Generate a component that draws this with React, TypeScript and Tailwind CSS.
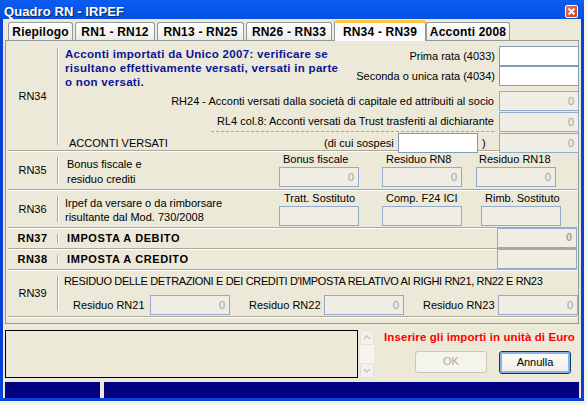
import React from 'react';

const Field: React.FC<{ w?: string; kind?: 'white' | 'off'; value?: string; bold?: boolean; cls?: string }> = ({
  w = 'w-[80px]',
  kind = 'off',
  value,
  bold,
  cls = '',
}) => (
  <div
    className={`${w} h-[20px] border flex items-center justify-end pr-[4px] shrink-0 ${
      kind === 'white' ? 'bg-white border-[#7F9DB9]' : 'bg-[#EFEDE4] border-[#93AACB]'
    } ${cls}`}
  >
    {value && (
      <span className={`text-[#A3A194] text-[11px] ${bold ? 'font-bold' : ''}`}>{value}</span>
    )}
  </div>
);

const RowLabel: React.FC<{ text: string; bold?: boolean }> = ({ text, bold }) => (
  <div className="w-[49px] flex items-center justify-center shrink-0">
    <span className={bold ? 'font-bold text-[11px] tracking-[0.5px]' : 'text-[11px]'}>{text}</span>
  </div>
);

const VSep: React.FC = () => (
  <div className="py-[5px] shrink-0 flex">
    <div className="w-px bg-[#ACA899]" />
    <div className="w-px bg-white" />
  </div>
);

const tabs = ['Riepilogo', 'RN1 - RN12', 'RN13 - RN25', 'RN26 - RN33', 'RN34 - RN39', 'Acconti 2008'];
const tabW = ['w-[65px]', 'w-[80px]', 'w-[87px]', 'w-[86px]', 'w-[92px]', 'w-[84px]'];

const Row: React.FC<{ h: string; children: React.ReactNode }> = ({ h, children }) => (
  <div className={`${h} flex border-b border-[#ACA899] shadow-[0_1px_0_#fff] mb-px`}>{children}</div>
);

export default function App() {
  return (
    <div className="w-[587px] h-[405px] bg-[#F3F2EC] overflow-hidden relative font-['Liberation_Sans',Arial,sans-serif] text-black text-[11px] leading-none">
      <div className="w-[584px] h-[401px] flex flex-col bg-[#0842D6]">
        {/* title bar */}
        <div className="h-[19px] flex items-center justify-between pl-[4px] pr-[6px] bg-gradient-to-b from-[#0A5CF0] to-[#0550E0]">
          <span className="text-white font-bold text-[13px] tracking-[0.1px] mt-[4px] [text-shadow:1px_1px_0_#0A246A]">
            Quadro RN - IRPEF
          </span>
          <div className="w-[13px] h-[13px] mt-[3px] rounded-[2px] border border-white bg-gradient-to-br from-[#E8734F] to-[#C8401B] flex items-center justify-center">
            <svg width="9" height="9" viewBox="0 0 9 9">
              <path d="M1.5 1.5 L7.5 7.5 M7.5 1.5 L1.5 7.5" stroke="white" strokeWidth="1.8" />
            </svg>
          </div>
        </div>

        {/* client */}
        <div className="flex-1 mx-[3px] mb-[3px] bg-[#ECE9D8] flex flex-col pl-[2px] pr-[2px]">
          {/* tabs */}
          <div className="h-[21px] flex items-end pl-[3px]">
            {tabs.map((t, i) =>
              i === 4 ? (
                <div
                  key={t}
                  className={`${tabW[i]} h-[21px] -mb-px z-10 bg-[#FCFCFE] border border-[#919B9C] border-b-0 rounded-t-[3px] border-t-[3px] border-t-[#FFC83C] flex items-center justify-center`}
                >
                  <span className="font-bold text-[12px] tracking-[0.2px]">{t}</span>
                </div>
              ) : (
                <div
                  key={t}
                  className={`${tabW[i]} h-[18px] mr-[2px] bg-gradient-to-b from-white to-[#ECEBE6] border border-[#919B9C] border-b-0 rounded-t-[3px] flex items-center justify-center`}
                >
                  <span className="font-bold text-[12px] tracking-[0.2px]">{t}</span>
                </div>
              )
            )}
          </div>

          {/* panel */}
          <div className="h-[284px] border border-[#919B9C] bg-[#ECE9D8] pl-[2px] pr-[1px] pt-[2px] flex flex-col">
            {/* RN34 */}
            <Row h="h-[108px]">
              <RowLabel text="RN34" />
              <VSep />
              <div className="flex-1 flex flex-col pt-[3px]">
                <div className="flex">
                  <div className="w-[284px] pl-[6px] pt-[1px] text-[#0B1498] font-bold text-[11.5px] leading-[14px] tracking-[0.3px]">
                    Acconti importati da Unico 2007: verificare se
                    <br />
                    risultano effettivamente versati, versati in parte
                    <br />o non versati.
                  </div>
                  <div className="flex-1 flex flex-col items-end">
                    <div className="flex items-center">
                      <span className="mr-[4px]">Prima rata (4033)</span>
                      <Field kind="white" />
                    </div>
                    <div className="flex items-center">
                      <span className="mr-[4px]">Seconda o unica rata (4034)</span>
                      <Field kind="white" />
                    </div>
                  </div>
                </div>
                <div className="flex items-center justify-end mt-[2px]">
                  <span className="mr-[5px]">RH24 - Acconti versati dalla società di capitale ed attribuiti al socio</span>
                  <Field value="0" />
                </div>
                <div className="flex items-center justify-end mt-px">
                  <span className="mr-[5px] h-[20px] flex items-center border-b border-dashed border-[#ACA899] pl-[6px]">
                    RL4 col.8: Acconti versati da Trust trasferiti al dichiarante
                  </span>
                  <Field value="0" />
                </div>
                <div className="flex items-center mt-px">
                  <span className="pl-[10px] w-[265px]">ACCONTI VERSATI</span>
                  <span className="w-[74px]">(di cui sospesi</span>
                  <Field kind="white" />
                  <span className="w-[21px] pl-[4px]">)</span>
                  <Field value="0" />
                </div>
              </div>
            </Row>

            {/* RN35 */}
            <Row h="h-[38px]">
              <RowLabel text="RN35" />
              <VSep />
              <div className="flex-1 flex">
                <div className="w-[220px] pl-[8px] pt-[5px] leading-[15px]">
                  Bonus fiscale e<br />residuo crediti
                </div>
                <div className="flex flex-col pt-[2px] w-[103px]">
                  <span className="pl-[4px] h-[13px]">Bonus fiscale</span>
                  <Field value="0" />
                </div>
                <div className="flex flex-col pt-[2px] w-[94px]">
                  <span className="pl-[4px] h-[13px]">Residuo RN8</span>
                  <Field value="0" />
                </div>
                <div className="flex flex-col pt-[2px]">
                  <span className="pl-[3px] h-[13px]">Residuo RN18</span>
                  <Field value="0" />
                </div>
              </div>
            </Row>

            {/* RN36 */}
            <Row h="h-[37px]">
              <RowLabel text="RN36" />
              <VSep />
              <div className="flex-1 flex">
                <div className="w-[220px] pl-[6px] pt-[5px] leading-[14px]">
                  Irpef da versare o da rimborsare<br />risultante dal Mod. 730/2008
                </div>
                <div className="flex flex-col pt-[2px] w-[103px]">
                  <span className="pl-[5px] h-[13px]">Tratt. Sostituto</span>
                  <Field />
                </div>
                <div className="flex flex-col pt-[2px] w-[99px]">
                  <span className="pl-[4px] h-[13px]">Comp. F24 ICI</span>
                  <Field />
                </div>
                <div className="flex flex-col pt-[2px]">
                  <span className="pl-[4px] h-[13px]">Rimb. Sostituto</span>
                  <Field />
                </div>
              </div>
            </Row>

            {/* RN37 */}
            <Row h="h-[20px]">
              <RowLabel text="RN37" bold />
              <VSep />
              <div className="flex-1 flex items-center justify-between">
                <span className="pl-[8px] font-bold tracking-[0.6px]">IMPOSTA A DEBITO</span>
                <Field value="0" bold cls="-mt-[2px]" />
              </div>
            </Row>

            {/* RN38 */}
            <Row h="h-[20px]">
              <RowLabel text="RN38" bold />
              <VSep />
              <div className="flex-1 flex items-center justify-between">
                <span className="pl-[8px] font-bold tracking-[0.6px]">IMPOSTA A CREDITO</span>
                <Field cls="-mt-[1px]" />
              </div>
            </Row>

            {/* RN39 */}
            <Row h="h-[46px]">
              <RowLabel text="RN39" />
              <VSep />
              <div className="flex-1 flex flex-col pt-[5px]">
                <span className="pl-[5px] h-[19px] whitespace-nowrap tracking-[-0.35px]">
                  RESIDUO DELLE DETRAZIONI E DEI CREDITI D'IMPOSTA RELATIVO AI RIGHI RN21, RN22 E RN23
                </span>
                <div className="flex items-center">
                  <span className="pl-[14px] w-[91px]">Residuo RN21</span>
                  <Field value="0" />
                  <span className="pl-[19px] w-[94px]">Residuo RN22</span>
                  <Field value="0" />
                  <span className="pl-[19px] w-[94px]">Residuo RN23</span>
                  <Field value="0" />
                </div>
              </div>
            </Row>
          </div>

          {/* bottom area */}
          <div className="flex mt-[6px] h-[48px]">
            <div className="w-[353px] h-[48px] border border-black bg-[#ECE9D8]" />
            <div className="w-[14px] ml-[2px] flex flex-col justify-between bg-[#F5F4EF]">
              <div className="h-[15px] bg-[#F2F1EB] border border-[#E3E1D6] rounded-[2px] flex items-center justify-center">
                <svg width="8" height="5" viewBox="0 0 8 5"><path d="M1 4 L4 1 L7 4" stroke="#C9C7BA" strokeWidth="1.5" fill="none" /></svg>
              </div>
              <div className="h-[15px] bg-[#F2F1EB] border border-[#E3E1D6] rounded-[2px] flex items-center justify-center">
                <svg width="8" height="5" viewBox="0 0 8 5"><path d="M1 1 L4 4 L7 1" stroke="#C9C7BA" strokeWidth="1.5" fill="none" /></svg>
              </div>
            </div>
            <div className="flex-1 flex flex-col items-end pr-[4px]">
              <span className="text-[#FF0000] font-bold text-[11.5px] tracking-[0.1px] mt-[2px]">
                Inserire gli importi in unità di Euro
              </span>
              <div className="flex mt-[7px] gap-[12px] pr-[4px]">
                <div className="w-[72px] h-[22px] rounded-[3px] border border-[#C9C7BA] bg-[#F5F4EA] flex items-center justify-center text-[#ACA899]">
                  OK
                </div>
                <div className="w-[72px] h-[23px] rounded-[3px] border border-[#003C74] bg-gradient-to-b from-white to-[#ECEBE6] shadow-[inset_0_0_0_2px_#8DB2E3] flex items-center justify-center">
                  Annulla
                </div>
              </div>
            </div>
          </div>

          {/* status bar */}
          <div className="flex h-[16px] mt-[4px] gap-[4px]">
            <div className="w-[95px] bg-[#000080]" />
            <div className="flex-1 bg-[#000080]" />
          </div>
        </div>
      </div>
    </div>
  );
}
